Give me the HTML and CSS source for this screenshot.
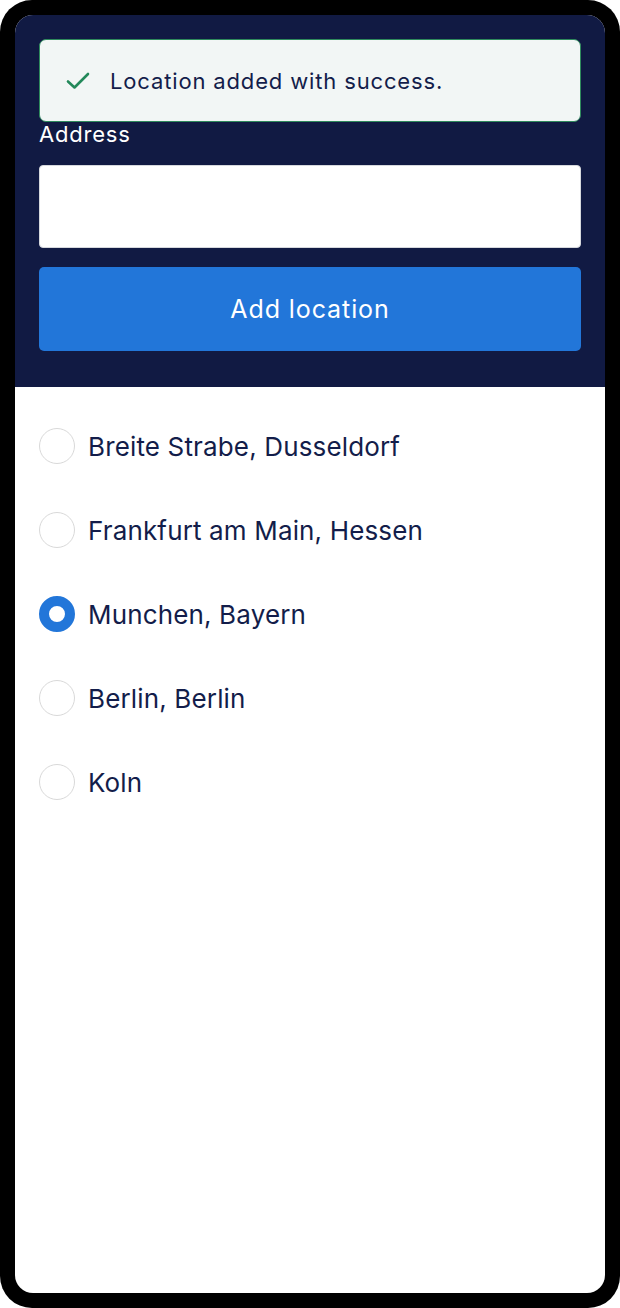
FILE: index.html
```html
<!DOCTYPE html>
<html lang="en">
<head>
<meta charset="utf-8">
<link rel="stylesheet" href="styles.css">
</head>
<body>
<div class="device">
  <div class="screen">
    <header class="top">
      <div class="toast">
        <svg class="check" width="24" height="18" viewBox="0 0 24 18" aria-hidden="true">
          <path d="M2 9.5 L8.5 15.5 L22 2" fill="none" stroke="#23895a" stroke-width="2.6" stroke-linecap="round" stroke-linejoin="round"/>
        </svg>
        <span class="toast-text">Location added with success.</span>
      </div>
      <label class="label" for="addr">Address</label>
      <input id="addr" class="input" type="text">
      <button class="btn">Add location</button>
    </header>
    <ul class="list">
      <li class="row"><span class="radio"></span><span class="name">Breite Strabe, Dusseldorf</span></li>
      <li class="row"><span class="radio"></span><span class="name">Frankfurt am Main, Hessen</span></li>
      <li class="row"><span class="radio on"></span><span class="name">Munchen, Bayern</span></li>
      <li class="row"><span class="radio"></span><span class="name">Berlin, Berlin</span></li>
      <li class="row"><span class="radio"></span><span class="name">Koln</span></li>
    </ul>
  </div>
</div>
</body>
</html>
```
FILE: styles.css
```css
* { box-sizing: border-box; }
html, body { margin: 0; padding: 0; background: #ffffff; }
body { font-family: "Inter", "Liberation Sans", sans-serif; }

.device {
  width: 620px;
  height: 1308px;
  background: #000;
  border-radius: 32px;
  padding: 15px;
}
.screen {
  height: 1278px;
  background: #fff;
  border-radius: 18px;
  overflow: hidden;
}
.top {
  background: #111a43;
  padding: 24px 24px 36px;
  display: flex;
  flex-direction: column;
}
.toast {
  height: 83px;
  background: #f2f6f5;
  border: 1.5px solid #2e8a5c;
  border-radius: 7px;
  display: flex;
  align-items: center;
  padding-left: 26px;
  gap: 20px;
}
.check { flex: none; margin-top: 1px; }
.toast-text {
  font-size: 22px;
  color: #131d4a;
  letter-spacing: 0.85px;
}
.label {
  color: #fff;
  font-size: 22px;
  line-height: 24px;
  letter-spacing: 0.8px;
}
.input {
  margin-top: 19px;
  height: 83px;
  width: 100%;
  background: #fff;
  border: 1px solid #d6d8dd;
  border-radius: 4px;
  font: inherit;
}
.btn {
  margin-top: 19px;
  height: 84px;
  width: 100%;
  background: #2276d9;
  border: none;
  border-radius: 5px;
  color: #fff;
  font-family: inherit;
  font-size: 25px;
  font-weight: 400;
  letter-spacing: 0.9px;
}
.list {
  list-style: none;
  margin: 0;
  padding: 17px 24px 0;
}
.row {
  height: 84px;
  display: flex;
  align-items: center;
  gap: 13px;
}
.radio {
  width: 36px;
  height: 36px;
  border-radius: 50%;
  border: 1.5px solid #d9d9d9;
  flex: none;
  background: #fff;
}
.radio.on {
  border: 10px solid #2276d9;
}
.name {
  font-size: 26px;
  color: #131d4a;
  letter-spacing: 0.15px;
}
```
